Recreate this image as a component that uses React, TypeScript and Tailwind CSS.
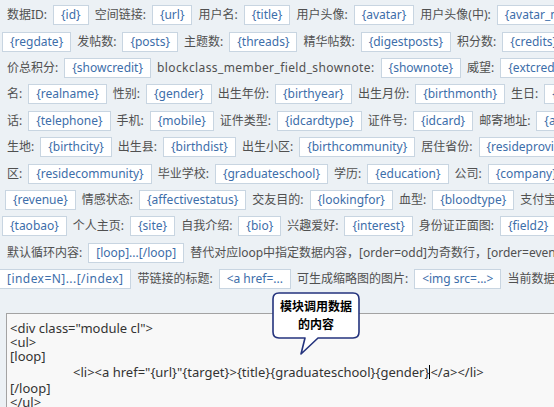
import React from "react";

type Item = string | { b: string; c?: string };

const rows: { ml: string; items: Item[] }[] = [
  {
    ml: "ml-0",
    items: ["数据ID:", { b: "{id}" }, "空间链接:", { b: "{url}" }, "用户名:", { b: "{title}" }, "用户头像:", { b: "{avatar}" }, "用户头像(中):", { b: "{avatar_middle}" }],
  },
  {
    ml: "ml-[-5px]",
    items: [{ b: "{regdate}" }, "发帖数:", { b: "{posts}" }, "主题数:", { b: "{threads}" }, "精华帖数:", { b: "{digestposts}" }, "积分数:", { b: "{credits}" }],
  },
  {
    ml: "ml-0",
    items: ["价总积分:", { b: "{showcredit}" }, "blockclass_member_field_shownote:", { b: "{shownote}" }, "威望:", { b: "{extcredits1}" }],
  },
  {
    ml: "ml-0",
    items: ["名:", { b: "{realname}" }, "性别:", { b: "{gender}" }, "出生年份:", { b: "{birthyear}" }, "出生月份:", { b: "{birthmonth}" }, "生日:", { b: "{birthday}" }],
  },
  {
    ml: "ml-0",
    items: ["话:", { b: "{telephone}" }, "手机:", { b: "{mobile}" }, "证件类型:", { b: "{idcardtype}" }, "证件号:", { b: "{idcard}" }, "邮寄地址:", { b: "{address}" }],
  },
  {
    ml: "ml-0",
    items: ["生地:", { b: "{birthcity}" }, "出生县:", { b: "{birthdist}" }, "出生小区:", { b: "{birthcommunity}" }, "居住省份:", { b: "{resideprovince}" }],
  },
  {
    ml: "ml-0",
    items: ["区:", { b: "{residecommunity}" }, "毕业学校:", { b: "{graduateschool}" }, "学历:", { b: "{education}" }, "公司:", { b: "{company}" }],
  },
  {
    ml: "ml-[-2px]",
    items: [{ b: "{revenue}" }, "情感状态:", { b: "{affectivestatus}" }, "交友目的:", { b: "{lookingfor}" }, "血型:", { b: "{bloodtype}" }, "支付宝:", { b: "{alipay}" }],
  },
  {
    ml: "ml-[-5px]",
    items: [{ b: "{taobao}" }, "个人主页:", { b: "{site}" }, "自我介绍:", { b: "{bio}" }, "兴趣爱好:", { b: "{interest}" }, "身份证正面图:", { b: "{field2}" }],
  },
  {
    ml: "ml-0",
    items: ["默认循环内容:", { b: "[loop]...[/loop]" }, "替代对应loop中指定数据内容，[order=odd]为奇数行，[order=even]为偶数行"],
  },
  {
    ml: "ml-[-8px]",
    items: [{ b: "[index=N]...[/index]", c: "tracking-[0.45px]" }, "带链接的标题:", { b: "<a href=..." }, "可生成缩略图的图片:", { b: "<img src=...>" }, "当前数据序号:"],
  },
];

function Row({ ml, items }: { ml: string; items: Item[] }) {
  return (
    <div className={`flex h-[26.4px] items-center gap-[6px] whitespace-nowrap ${ml}`}>
      {items.map((it, i) =>
        typeof it === "string" ? (
          <span
            key={i}
            className={
              it.startsWith("blockclass")
                ? "shrink-0 tracking-[0.4px] text-[#505050]"
                : "shrink-0 text-[#505050]"
            }
          >
            {it}
          </span>
        ) : (
          <span
            key={i}
            className={`flex h-[20px] shrink-0 items-center border border-[#c8d5e1] bg-white px-[7px] text-[#3d6eaa] ${it.c ?? ""}`}
          >
            {it.b}
          </span>
        )
      )}
    </div>
  );
}

export default function App() {
  return (
    <div
      className="relative h-[407px] w-[554px] overflow-hidden bg-[#ecf1f5] text-[12px] leading-none"
      style={{ fontFamily: '"Noto Sans", "Noto Sans CJK SC", sans-serif' }}
    >
      <div className="pl-[7px] pt-[2px]">
        {rows.map((r, i) => (
          <Row key={i} ml={r.ml} items={r.items} />
        ))}
      </div>

      <div className="ml-[6px] mt-[21px] h-[120px] border-l border-t border-[#a3a3a3] bg-[#f8f8f8] pl-[3px] pt-[7px] text-[13px] leading-[14px] text-[#333] whitespace-nowrap">
        <div className="h-[14px]">&lt;div class="module cl"&gt;</div>
        <div className="h-[14px]">&lt;ul&gt;</div>
        <div className="h-[14px]">[loop]</div>
        <div className="flex h-[18px] items-center pl-[63px]">
          <span>&lt;li&gt;&lt;a href="{"{url}"}"{"{target}"}&gt;{"{title}"}{"{graduateschool}"}{"{gender}"}</span>
          <span className="inline-block h-[14px] w-px bg-black" />
          <span>&lt;/a&gt;&lt;/li&gt;</span>
        </div>
        <div className="h-[14px]">[/loop]</div>
        <div className="h-[14px]">&lt;/ul&gt;</div>
      </div>

      <div className="absolute left-[272px] top-[292px] h-[64px] w-[90px]">
        <svg width="90" height="64" viewBox="0 0 90 64" className="absolute left-0 top-0">
          <path
            d="M7 1 H81 Q87 1 87 7 V40 Q87 46 81 46 H46 L29 62 L33 46 H7 Q1 46 1 40 V7 Q1 1 7 1 Z"
            fill="white"
            stroke="#24337d"
            strokeWidth="1.6"
            strokeLinejoin="round"
          />
        </svg>
        <div className="absolute left-[1px] top-[6px] flex w-[86px] flex-col items-center text-[12px] font-bold leading-[18px] text-black">
          <span>模块调用数据</span>
          <span>的内容</span>
        </div>
      </div>
    </div>
  );
}
